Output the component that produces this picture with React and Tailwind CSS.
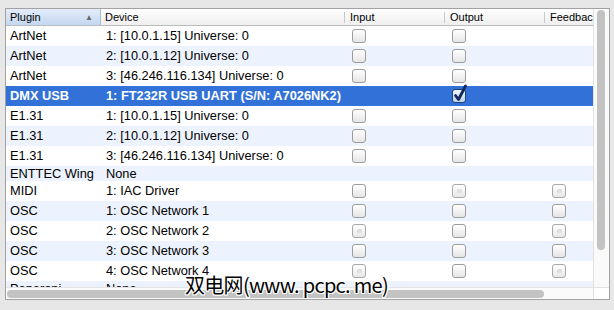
import React from "react";

const rows = [
  { plugin: "ArtNet", device: "1: [10.0.1.15] Universe: 0", input: "on", output: "on" },
  { plugin: "ArtNet", device: "2: [10.0.1.12] Universe: 0", input: "on", output: "on" },
  { plugin: "ArtNet", device: "3: [46.246.116.134] Universe: 0", input: "on", output: "on" },
  { plugin: "DMX USB", device: "1: FT232R USB UART (S/N: A7026NK2)", output: "checked", selected: true },
  { plugin: "E1.31", device: "1: [10.0.1.15] Universe: 0", input: "on", output: "on" },
  { plugin: "E1.31", device: "2: [10.0.1.12] Universe: 0", input: "on", output: "on" },
  { plugin: "E1.31", device: "3: [46.246.116.134] Universe: 0", input: "on", output: "on" },
  { plugin: "ENTTEC Wing", device: "None" },
  { plugin: "MIDI", device: "1: IAC Driver", input: "on", output: "dim", feedback: "dim" },
  { plugin: "OSC", device: "1: OSC Network 1", input: "on", output: "on", feedback: "on" },
  { plugin: "OSC", device: "2: OSC Network 2", input: "dim", output: "on", feedback: "dim" },
  { plugin: "OSC", device: "3: OSC Network 3", input: "on", output: "on", feedback: "on" },
  { plugin: "OSC", device: "4: OSC Network 4", input: "dim", output: "on", feedback: "dim" },
  { plugin: "Peperoni", device: "None" },
];

// little aqua-ish checkbox
const Check = ({ kind }) => {
  if (!kind) return null;
  if (kind === "checked") {
    return (
      <div className="relative h-[14px] w-[14px]">
        <div className="h-[14px] w-[14px] rounded-[3px] border border-[#203f73] bg-gradient-to-b from-[#eef5ff] to-[#bcd3f2]" />
        <svg className="absolute left-[1px] top-[-5px]" width="15" height="18" viewBox="0 0 15 18">
          <path d="M2.5 11.5 L5.5 15.5 L12.5 2" fill="none" stroke="#14295a" strokeWidth="2.8" strokeLinecap="round" strokeLinejoin="round" />
        </svg>
      </div>
    );
  }
  if (kind === "dim") {
    return (
      <div className="flex h-[14px] w-[14px] items-center justify-center rounded-[3px] border border-[#a8a8a8] bg-gradient-to-b from-white to-[#e8e8e8]">
        <div className="h-[4px] w-[5px] rounded-[1px] bg-[#e0e0e0]" />
      </div>
    );
  }
  return <div className="h-[14px] w-[14px] rounded-[3px] border border-[#9c9c9c] bg-gradient-to-b from-white to-[#e6e6e6]" />;
};

const HeadCell = ({ width, children }) => (
  <div className={`flex flex-none items-center ${width}`}>
    <span className="h-[11px] w-px bg-[#c9c9c9]" />
    <span className="pl-[5px]">{children}</span>
  </div>
);

export default function App() {
  return (
    <div
      className="relative h-[310px] w-[614px] overflow-hidden bg-[#e7e7e7] pl-[5px] pt-[8px]"
      style={{ fontFamily: '"Liberation Sans", Arial, sans-serif' }}
    >
      <div className="flex h-[292px] w-[605px] border border-[#a2a2a2] bg-white">
        {/* table body */}
        <div className="relative w-[587px] overflow-hidden">
          <div className="flex h-[17px] w-[700px] border-b border-[#bcbcbc] bg-gradient-to-b from-white to-[#efefef] text-[11px] text-black">
            <div className="relative flex w-[95px] flex-none items-center border-r border-[#aebdd3] bg-gradient-to-b from-[#e3edfb] to-[#c4d7f0] pl-[4px]">
              Plugin
              <span className="absolute right-[7px] top-[3px] text-[8px] text-[#666]">▲</span>
            </div>
            <div className="flex w-[243px] flex-none items-center pl-[4px]">Device</div>
            <HeadCell width="w-[100px]">Input</HeadCell>
            <HeadCell width="w-[100px]">Output</HeadCell>
            <HeadCell width="w-[100px]">Feedback</HeadCell>
          </div>

          {rows.map((r, i) => {
            const hasBoxes = r.input || r.output || r.feedback;
            const bg = r.selected ? "bg-[#3272d8] text-white font-bold" : i % 2 ? "bg-[#edf3fe] text-black" : "bg-white text-black";
            return (
              <div
                key={i}
                className={`flex w-[700px] items-center whitespace-nowrap text-[12.8px] ${hasBoxes ? "h-[20px]" : "h-[15px]"} ${bg}`}
              >
                <div className="w-[95px] flex-none pl-[4px]">{r.plugin}</div>
                <div className="w-[243px] flex-none pl-[5px]">{r.device}</div>
                <div className="w-[100px] flex-none pl-[8px]"><Check kind={r.input} /></div>
                <div className="w-[100px] flex-none pl-[8px]"><Check kind={r.output} /></div>
                <div className="w-[100px] flex-none pl-[8px]"><Check kind={r.feedback} /></div>
              </div>
            );
          })}

          {/* horizontal scroller over the last row */}
          <div className="absolute bottom-0 left-0 h-[12px] w-full border-t border-[#e4e4e4] bg-[#fbfbfb]">
            <div className="ml-[1px] mt-[2px] h-[8px] w-[537px] rounded-full bg-[#c3c3c3]" />
          </div>
        </div>

        {/* vertical scroller */}
        <div className="flex w-[16px] flex-col border-l border-[#e2e2e2] bg-[#fafafa]">
          <div className="flex-1 pl-[3px] pt-[1px]">
            <div className="h-[240px] w-[8px] rounded-full bg-[#c3c3c3]" />
          </div>
          <div className="h-[12px] border-t border-[#e2e2e2] bg-white" />
        </div>
      </div>

      {/* watermark */}
      <div
        className="absolute left-[185px] top-[273px] whitespace-nowrap text-[20px] leading-[24px] tracking-[-0.7px] text-black"
        style={{
          fontFamily: '"Noto Sans CJK SC", "Liberation Sans", sans-serif',
          textShadow: "1px 0 #fff, -1px 0 #fff, 0 1px #fff, 0 -1px #fff, 1px 1px #fff, -1px -1px #fff, 1px -1px #fff, -1px 1px #fff",
        }}
      >
        双电网(www. pcpc. me)
      </div>
    </div>
  );
}
